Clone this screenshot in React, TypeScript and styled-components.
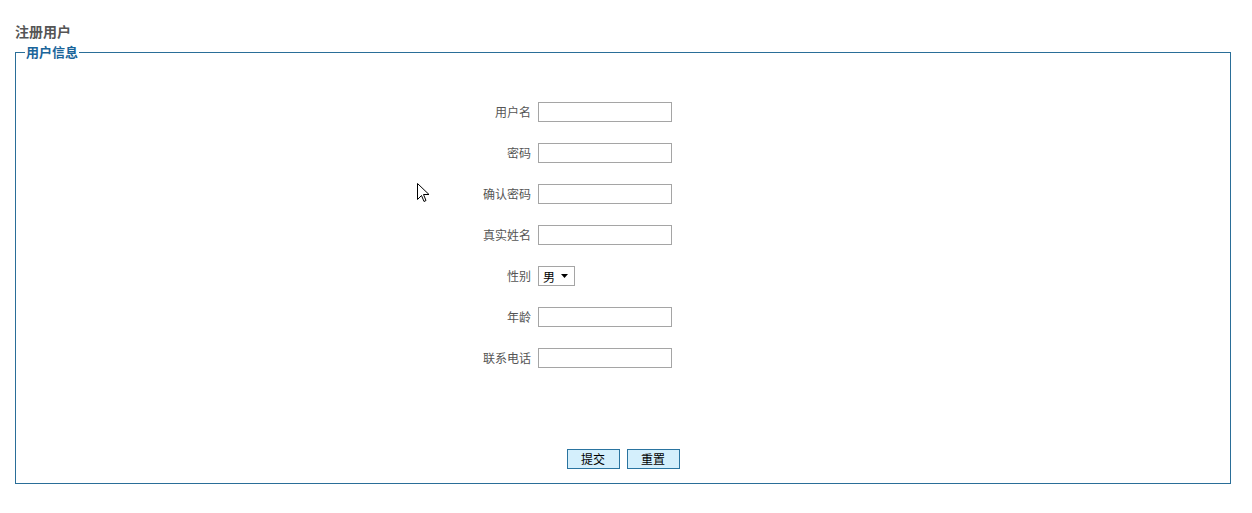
import React from "react";
import styled, { createGlobalStyle } from "styled-components";

const Global = createGlobalStyle`
  html, body { margin: 0; padding: 0; background: #fff; }
  body { font-family: "Noto Sans CJK SC", "DejaVu Sans", sans-serif; font-size: 12px; color: #555; }
`;

const Page = styled.div`
  position: relative;
  padding: 21px 21px 0 15px;
`;

const Title = styled.h2`
  margin: 0 0 4px;
  font-size: 14px;
  line-height: 20px;
  font-weight: bold;
  color: #555;
`;

const Box = styled.fieldset`
  margin: 0;
  padding: 0 9px 14px;
  border: 1px solid #2a6e98;
  min-width: 0;
`;

const Legend = styled.legend`
  padding: 0 1px;
  font-size: 13px;
  line-height: 14px;
  font-weight: bold;
  color: #1a659a;
`;

const Form = styled.div`
  display: grid;
  grid-template-columns: 513px auto 1fr;
  row-gap: 21px;
  padding-top: 43px;
  align-items: center;
`;

const Label = styled.label`
  grid-column: 1;
  text-align: right;
  padding-right: 7px;
  line-height: 20px;
  color: #555;
`;

const Field = styled.input`
  grid-column: 2;
  box-sizing: border-box;
  width: 134px;
  height: 20px;
  margin: 0;
  border: 1px solid #a5a5a5;
  padding: 0 3px;
  font: inherit;
  outline: none;
`;

const SelectWrap = styled.div`
  grid-column: 2;
  position: relative;
  width: 37px;
  height: 20px;
`;

const Select = styled.select`
  appearance: none;
  box-sizing: border-box;
  width: 37px;
  height: 20px;
  margin: 0;
  padding: 0 0 0 4px;
  border: 1px solid #a5a5a5;
  background: #fff;
  font: 12px "Noto Sans CJK SC", sans-serif;
  color: #000;
`;

const Caret = styled.svg`
  position: absolute;
  left: 23px;
  top: 8px;
  pointer-events: none;
`;

const Actions = styled.div`
  display: flex;
  justify-content: center;
  gap: 7px;
  margin-top: 81px;
`;

const Button = styled.button`
  box-sizing: border-box;
  width: 53px;
  height: 20px;
  padding: 0;
  border: 1px solid #2a74a0;
  background: #d4effc;
  color: #000;
  font: 12px "Noto Sans CJK SC", sans-serif;
  line-height: 18px;
`;

const Cursor = styled.svg`
  position: absolute;
  left: 417px;
  top: 183px;
`;

const rows = ["用户名", "密码", "确认密码", "真实姓名"];
const rows2 = ["年龄", "联系电话"];

export default function App() {
  return (
    <Page>
      <Global />
      <Title>注册用户</Title>
      <Box>
        <Legend>用户信息</Legend>
        <Form>
          {rows.map((r) => (
            <React.Fragment key={r}>
              <Label>{r}</Label>
              <Field type={r.includes("密码") ? "password" : "text"} />
              <span />
            </React.Fragment>
          ))}
          <Label>性别</Label>
          <SelectWrap>
            <Select defaultValue="男">
              <option>男</option>
              <option>女</option>
            </Select>
            <Caret width="7" height="4" viewBox="0 0 7 4">
              <path d="M0 0h7L3.5 4z" fill="#000" />
            </Caret>
          </SelectWrap>
          <span />
          {rows2.map((r) => (
            <React.Fragment key={r}>
              <Label>{r}</Label>
              <Field type="text" />
              <span />
            </React.Fragment>
          ))}
        </Form>
        <Actions>
          <Button>提交</Button>
          <Button>重置</Button>
        </Actions>
      </Box>
      <Cursor width="13" height="21" viewBox="0 0 13 21">
        <path
          d="M0.5 0.5 L0.5 16.5 L4.5 12.5 L7 18.5 L9 17.5 L6.5 11.5 L12 11.5 Z"
          fill="#fff"
          stroke="#000"
          strokeWidth="1"
          strokeLinejoin="miter"
        />
      </Cursor>
    </Page>
  );
}
